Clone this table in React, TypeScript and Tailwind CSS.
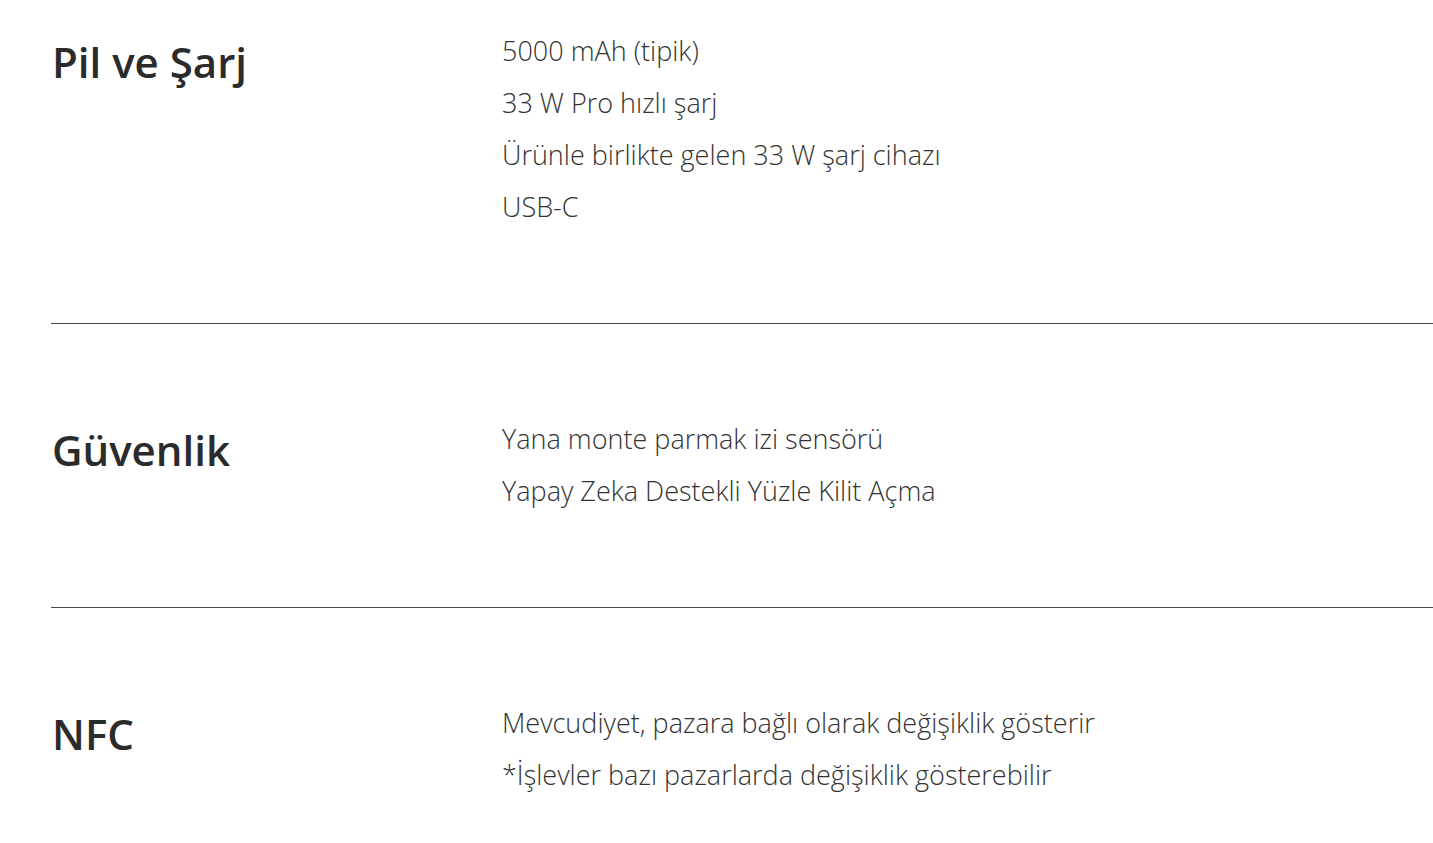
import React from 'react';

type Spec = {
  title: string;
  lines: string[];
};

const specs: Spec[] = [
  {
    title: 'Pil ve Şarj',
    lines: ['5000 mAh (tipik)', '33 W Pro hızlı şarj', 'Ürünle birlikte gelen 33 W şarj cihazı', 'USB-C'],
  },
  {
    title: 'Güvenlik',
    lines: ['Yana monte parmak izi sensörü', 'Yapay Zeka Destekli Yüzle Kilit Açma'],
  },
  {
    title: 'NFC',
    lines: ['Mevcudiyet, pazara bağlı olarak değişiklik gösterir', '*İşlevler bazı pazarlarda değişiklik gösterebilir'],
  },
];

export default function App() {
  return (
    <div className="w-full bg-white pl-[51px] text-[#333] font-['Open_Sans',sans-serif] overflow-hidden">
      {specs.map((spec, i) => (
        <div
          key={spec.title}
          className={i === 0 ? 'grid grid-cols-[451px_1fr] pt-[25px] pb-[90px]' : 'grid grid-cols-[451px_1fr] border-t border-[#4a4a4a] pt-[89px] pb-[90px]'}
        >
          <h2 className="mt-[5px] pl-px text-[42px] font-semibold text-[#2b2b2b] leading-normal">{spec.title}</h2>
          <div className="flex flex-col">
            {spec.lines.map((line) => (
              <p key={line} className="text-[27px] font-light leading-[52px] whitespace-nowrap">
                {line}
              </p>
            ))}
          </div>
        </div>
      ))}
    </div>
  );
}
